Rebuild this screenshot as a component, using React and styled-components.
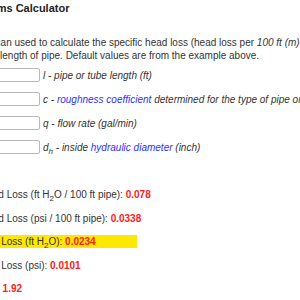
import React from 'react';
import styled, { createGlobalStyle } from 'styled-components';

const GlobalStyle = createGlobalStyle`
  html, body {
    margin: 0;
    padding: 0;
    background: #fff;
    overflow: hidden;
  }
  body {
    font-family: "Liberation Sans", Arial, sans-serif;
  }
`;

const Page = styled.div`
  margin-left: -70px;
  width: 900px;
  color: #333;
  font-size: 10px;
  line-height: 13px;
  white-space: nowrap;
`;

const Title = styled.h3`
  margin: 1px 0 0;
  padding-left: 2px;
  font-size: 11px;
  line-height: 14px;
  font-weight: bold;
  color: #222;
`;

const Intro = styled.p`
  margin: 21px 0 0;
`;

const Form = styled.div`
  margin-top: 6px;
  display: flex;
  flex-direction: column;
  gap: 10px;
`;

const Field = styled.label`
  display: flex;
  align-items: center;
  gap: 3px;
  height: 14px;
  font-style: italic;
`;

const Input = styled.input`
  box-sizing: border-box;
  width: 110px;
  height: 14px;
  padding: 0 3px;
  border: 1px solid #b8b8b8;
  border-radius: 2px;
  font: inherit;
  font-style: normal;
  font-size: 10px;
`;

const Link = styled.a`
  color: #2f2fff;
  text-decoration: none;
`;

const Results = styled.div`
  margin-top: 34px;
  display: flex;
  flex-direction: column;
  gap: 10.5px;
`;

const ResultLine = styled.div`
  width: ${(p) => (p.$highlight ? '207px' : 'auto')};
  background: ${(p) => (p.$highlight ? '#ffe800' : 'transparent')};
`;

const Value = styled.b`
  color: #ff2020;
`;

const Sub = styled.sub`
  font-size: 0.8em;
  line-height: 0;
`;

const fields = [
  { value: '100', label: <>l - pipe or tube length (ft)</> },
  {
    value: '140',
    label: (
      <>
        c - <Link href="#">roughness coefficient</Link> determined for the type of pipe or tube
      </>
    ),
  },
  { value: '20', label: <>q - flow rate (gal/min)</> },
  {
    value: '2',
    label: (
      <>
        d<Sub>h</Sub> - inside <Link href="#">hydraulic diameter</Link> (inch)
      </>
    ),
  },
];

const H2O = () => (
  <>
    H<Sub>2</Sub>O
  </>
);

const results = [
  { label: <>Calculated Head Loss (ft <H2O /> / 100 ft pipe): </>, value: '0.078' },
  { label: <>Calculated Head Loss (psi / 100 ft pipe): </>, value: '0.0338' },
  { label: <>Resulting Head Loss (ft <H2O />): </>, value: '0.0234', highlight: true },
  { label: <>Resulting Head Loss (psi): </>, value: '0.0101' },
  { label: <>Velocity, v (ft/s): </>, value: '1.92' },
];

export default function App() {
  return (
    <>
      <GlobalStyle />
      <Page>
        <Title>Hazen-Williams Calculator</Title>
        <Intro>
          The calculator can used to calculate the specific head loss (head loss per <em>100 ft (m)</em>
          <br />
          for a given flow length of pipe. Default values are from the example above.
        </Intro>
        <Form>
          {fields.map((f, i) => (
            <Field key={i}>
              <Input defaultValue={f.value} />
              <span>{f.label}</span>
            </Field>
          ))}
        </Form>
        <Results>
          {results.map((r, i) => (
            <ResultLine key={i} $highlight={r.highlight}>
              {r.label}
              <Value>{r.value}</Value>
            </ResultLine>
          ))}
        </Results>
      </Page>
    </>
  );
}
